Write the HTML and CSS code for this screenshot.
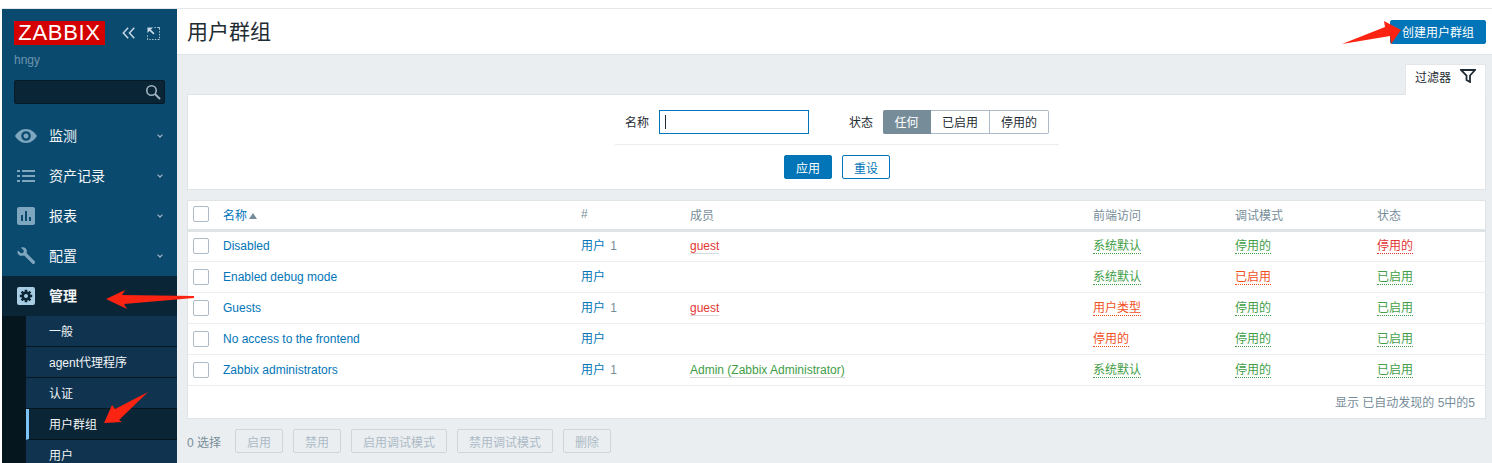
FILE: index.html
```html
<!DOCTYPE html>
<html lang="zh-CN">
<head>
    <meta charset="UTF-8">
    <title>用户群组</title>
    <link rel="stylesheet" href="styles.css">
</head>
<body>
    <div class="layout">
        <aside class="sidebar">
            <div class="brand">
                <span class="logo">ZABBIX</span>
                <svg class="tool-icon" width="14" height="12" viewBox="0 0 16 14" fill="none" stroke="#c5d8e4" stroke-width="1.7" preserveAspectRatio="none">
                    <path d="M7 1 1.500 7 7 13M14 1 8.500 7 14 13"/>
                </svg>
                <svg class="tool-icon" width="13" height="13" viewBox="0 0 14 14" fill="none" stroke="#c5d8e4">
                    <path d="M8 .5h1.500M11 .5h2.500V3M13.500 4.500V6M13.500 7.500V9M13.500 10.500V12M13.500 13.500h-2M10 13.500H8.500M7 13.500H5.500M4 13.500H2.500M1 13.500H.5V12M.5 10.500V9"/>
                    <path d="M.5.500h6l-6 6z" fill="#c5d8e4" stroke="none"/>
                    <path d="M3 3l4.500 4.500" stroke-width="1.800"/>
                </svg>
            </div>
            <div class="user-name">hngy</div>
            <div class="search-box">
                <svg width="16" height="16" viewBox="0 0 16 16" fill="none" stroke="#9fb4c2" stroke-width="1.600">
                    <circle cx="6.500" cy="6.500" r="4.700"/>
                    <path d="M10 10l5 5" stroke-width="2"/>
                </svg>
            </div>
            <nav class="menu">
                <a class="menu-item">
                    <svg class="menu-icon" width="22" height="14" viewBox="0 0 22 14"><path fill="#7ea6bf" fill-rule="evenodd" d="M11 0c5 0 9 3.500 11 7-2 3.500-6 7-11 7S2 10.500 0 7c2-3.500 6-7 11-7zm0 2.200a4.800 4.800 0 1 0 0 9.600 4.800 4.800 0 0 0 0-9.600zM11 4.500a2.500 2.500 0 1 1 0 5 2.500 2.500 0 0 1 0-5z"/></svg>
                    <span class="menu-label">监测</span><span class="chevron"></span>
                </a>
                <a class="menu-item">
                    <svg class="menu-icon" width="18" height="12" viewBox="0 0 18 12" fill="#7ea6bf"><path d="M0 0h3v2H0zM5 0h13v2H5zM0 5h3v2H0zM5 5h13v2H5zM0 10h3v2H0zM5 10h13v2H5z"/></svg>
                    <span class="menu-label">资产记录</span><span class="chevron"></span>
                </a>
                <a class="menu-item">
                    <svg class="menu-icon" width="18" height="18" viewBox="0 0 18 18"><rect width="18" height="18" rx="2" fill="#7ea6bf"/><path fill="#0b4a6f" d="M4 8h2v6H4zM8 4h2v10H8zM12 10h2v4h-2z"/></svg>
                    <span class="menu-label">报表</span><span class="chevron"></span>
                </a>
                <a class="menu-item">
                    <svg class="menu-icon" width="18" height="18" viewBox="0 0 18 18"><path fill="#7ea6bf" d="M1 3.500 4 6.300l2.300-.5.600-2.300L4 .8C6.500-.4 9.500.8 9.800 3.800c.1.900 0 1.700-.3 2.300l8 8c.7.800.6 1.700 0 2.300-.7.700-1.600.7-2.300 0l-8-7.900C4.100 9.400 1.500 8.600.6 6.300.3 5.500.5 4.300 1 3.500z"/></svg>
                    <span class="menu-label">配置</span><span class="chevron"></span>
                </a>
                <a class="menu-item menu-item-open">
                    <svg class="menu-icon" width="18" height="18" viewBox="0 0 18 18">
                        <rect width="18" height="18" rx="2" fill="#a9cde3"/>
                        <g stroke="#0a2536" stroke-width="2.600">
                            <path d="M9 2.800v12.400M2.800 9h12.400M4.600 4.600l8.800 8.800M13.400 4.600l-8.800 8.800"/>
                        </g>
                        <circle cx="9" cy="9" r="4.600" fill="#0a2536"/>
                        <circle cx="9" cy="9" r="2" fill="#a9cde3"/>
                    </svg>
                    <span class="menu-label">管理</span>
                </a>
                <div class="submenu">
                    <a class="submenu-item">一般</a>
                    <a class="submenu-item">agent代理程序</a>
                    <a class="submenu-item">认证</a>
                    <a class="submenu-item submenu-item-active">用户群组</a>
                    <a class="submenu-item">用户</a>
                </div>
            </nav>
        </aside>

        <main class="main">
            <header class="page-header">
                <h1>用户群组</h1>
                <button class="btn btn-primary">创建用户群组</button>
            </header>

            <div class="content">
                <div class="filter-tabs">
                    <div class="filter-tab">
                        过滤器
                        <svg width="16" height="14" viewBox="0 0 16 14" fill="none" stroke="#1f2c33" stroke-width="1.800"><path d="M1 1h14L10 6.500V13L6.500 11V6.500z"/></svg>
                    </div>
                </div>
                <section class="filter-panel">
                    <div class="filter-fields">
                        <label class="field-label">名称</label>
                        <div class="text-input"><span class="caret"></span></div>
                        <label class="field-label field-label-status">状态</label>
                        <div class="radio-group">
                            <span class="radio radio-on">任何</span>
                            <span class="radio">已启用</span>
                            <span class="radio">停用的</span>
                        </div>
                    </div>
                    <div class="filter-actions">
                        <button class="btn btn-primary btn-filter">应用</button>
                        <button class="btn btn-outline btn-filter">重设</button>
                    </div>
                </section>

                <section class="table-panel">
                    <table class="list-table">
                        <thead>
                            <tr>
                                <th class="col-check"><span class="checkbox"></span></th>
                                <th class="col-name"><span class="sort-link">名称</span><span class="sort-arrow"></span></th>
                                <th class="col-count">#</th>
                                <th class="col-members">成员</th>
                                <th class="col-front">前端访问</th>
                                <th class="col-debug">调试模式</th>
                                <th>状态</th>
                            </tr>
                        </thead>
                        <tbody>
                            <tr>
                                <td><span class="checkbox"></span></td>
                                <td><a class="link">Disabled</a></td>
                                <td class="cell-cjk"><a class="link">用户</a> <span class="count">1</span></td>
                                <td><a class="member red">guest</a></td>
                                <td class="cell-cjk"><span class="state green">系统默认</span></td>
                                <td class="cell-cjk"><span class="state green">停用的</span></td>
                                <td class="cell-cjk"><span class="state red">停用的</span></td>
                            </tr>
                            <tr>
                                <td><span class="checkbox"></span></td>
                                <td><a class="link">Enabled debug mode</a></td>
                                <td class="cell-cjk"><a class="link">用户</a></td>
                                <td></td>
                                <td class="cell-cjk"><span class="state green">系统默认</span></td>
                                <td class="cell-cjk"><span class="state orange">已启用</span></td>
                                <td class="cell-cjk"><span class="state green">已启用</span></td>
                            </tr>
                            <tr>
                                <td><span class="checkbox"></span></td>
                                <td><a class="link">Guests</a></td>
                                <td class="cell-cjk"><a class="link">用户</a> <span class="count">1</span></td>
                                <td><a class="member red">guest</a></td>
                                <td class="cell-cjk"><span class="state orange">用户类型</span></td>
                                <td class="cell-cjk"><span class="state green">停用的</span></td>
                                <td class="cell-cjk"><span class="state green">已启用</span></td>
                            </tr>
                            <tr>
                                <td><span class="checkbox"></span></td>
                                <td><a class="link">No access to the frontend</a></td>
                                <td class="cell-cjk"><a class="link">用户</a></td>
                                <td></td>
                                <td class="cell-cjk"><span class="state orange">停用的</span></td>
                                <td class="cell-cjk"><span class="state green">停用的</span></td>
                                <td class="cell-cjk"><span class="state green">已启用</span></td>
                            </tr>
                            <tr>
                                <td><span class="checkbox"></span></td>
                                <td><a class="link">Zabbix administrators</a></td>
                                <td class="cell-cjk"><a class="link">用户</a> <span class="count">1</span></td>
                                <td><a class="member green">Admin (Zabbix Administrator)</a></td>
                                <td class="cell-cjk"><span class="state green">系统默认</span></td>
                                <td class="cell-cjk"><span class="state green">停用的</span></td>
                                <td class="cell-cjk"><span class="state green">已启用</span></td>
                            </tr>
                        </tbody>
                    </table>
                    <div class="table-stats">显示 已自动发现的 5中的5</div>
                </section>

                <div class="action-bar">
                    <span class="selected-count">0 选择</span>
                    <button class="btn-off">启用</button>
                    <button class="btn-off">禁用</button>
                    <button class="btn-off">启用调试模式</button>
                    <button class="btn-off">禁用调试模式</button>
                    <button class="btn-off">删除</button>
                </div>
            </div>
        </main>
    </div>

    <!-- red arrows drawn over the screenshot -->
    <svg class="annotations" width="1492" height="463" viewBox="0 0 1492 463" fill="#fb2311">
        <path d="M1342 44 1385 27 1384 21 1401 30 1391 44 1390 36z"/>
        <path d="M106 299 125 290 122 295 194 296 194 298 124 304 127 309z"/>
        <path d="M104 423 112 405 115 409 148 392 119 420 122 422z"/>
    </svg>
</body>
</html>
```

FILE: styles.css
```css
* {
    box-sizing: border-box;
}

html, body {
    height: 100%;
    margin: 0;
    overflow: hidden;
}

body {
    position: relative;
    padding: 8px 0 0 2px;
    background: #fff;
    font-family: "Liberation Sans", "Noto Sans CJK SC", sans-serif;
    font-size: 12px;
    color: #1f2c33;
}

.layout {
    display: flex;
    height: 455px;
    border-top: 1px solid #e4e7e9;
}

/* sidebar */
.sidebar {
    flex: 0 0 175px;
    background: #0b4a6f;
    overflow: hidden;
}

.brand {
    display: flex;
    align-items: center;
    padding: 12px 0 0 12px;
}

.logo {
    width: 91px;
    height: 24px;
    background: #d40000;
    color: #fff;
    font-size: 22px;
    line-height: 24px;
    text-align: center;
    letter-spacing: 0.7px;
}

.tool-icon {
    margin-left: 17px;
}

.tool-icon:last-child {
    margin-left: 11px;
}

.user-name {
    padding: 8px 0 0 12px;
    height: 27px;
    color: #6d95ae;
    font-size: 12px;
}

.search-box {
    display: flex;
    align-items: center;
    justify-content: flex-end;
    width: 151px;
    height: 24px;
    margin: 8px 0 0 12px;
    padding-right: 3px;
    background: #0a2536;
    border: 1px solid #051a26;
    border-radius: 2px;
}

.menu {
    margin-top: 12px;
}

.menu-item {
    position: relative;
    display: flex;
    align-items: center;
    height: 40px;
    padding-bottom: 3px;
    color: #f2f5f7;
    font-size: 14px;
}

.menu-icon {
    position: absolute;
    left: 15px;
    top: 50%;
    transform: translateY(-50%);
}

.menu-item:first-child .menu-icon {
    left: 13px;
}

.menu-label {
    margin-left: 47px;
}

.chevron {
    position: absolute;
    right: 15px;
    top: 17px;
    width: 4px;
    height: 4px;
    border-right: 1px solid #a6c2d4;
    border-bottom: 1px solid #a6c2d4;
    transform: rotate(45deg);
}

.menu-item-open {
    background: #0a2536;
    font-weight: bold;
}

.submenu {
    padding-left: 24px;
    background: #06161f;
}

.submenu-item {
    display: flex;
    align-items: center;
    height: 31px;
    padding: 0 0 2px 23px;
    background: #10344f;
    border-bottom: 1px solid #06161f;
    color: #f2f5f7;
    font-size: 12px;
}

.submenu-item-active {
    background: #0a2536;
    padding-left: 20px;
    border-left: 3px solid #7cc4f5;
}

/* main area */
.main {
    flex: 1;
    min-width: 0;
    background: #ebeef0;
}

.page-header {
    display: flex;
    align-items: center;
    justify-content: space-between;
    height: 46px;
    padding: 0 6px 0 10px;
    background: #fff;
    border-bottom: 1px solid #dfe4e7;
}

h1 {
    margin: 0 0 3px;
    font-size: 21px;
    font-weight: normal;
}

.btn {
    height: 24px;
    padding: 0 11px;
    border: 1px solid #0275b8;
    border-radius: 2px;
    font-family: inherit;
    font-size: 12px;
}

.btn-primary {
    background: #0275b8;
    color: #fff;
}

.btn-outline {
    background: #fff;
    color: #0275b8;
}

.content {
    padding: 0 6px 0 10px;
}

.filter-tabs {
    display: flex;
    justify-content: flex-end;
    padding-top: 9px;
}

.filter-tab {
    display: flex;
    align-items: center;
    justify-content: space-between;
    width: 81px;
    height: 31px;
    margin-bottom: -1px;
    padding: 0 9px 8px 9px;
    background: #fff;
    border: 1px solid #e4e7e9;
    border-bottom: 0;
    position: relative;
    font-size: 12px;
}

.filter-panel {
    height: 96px;
    padding: 15px 0 0 1px;
    background: #fff;
    border: 1px solid #dfe4e7;
}

.filter-fields {
    display: flex;
    align-items: center;
    justify-content: center;
    box-sizing: content-box;
    width: 444px;
    height: 24px;
    margin: 0 auto;
    padding-bottom: 10px;
    border-bottom: 1px solid #ebeef0;
}

.field-label {
    margin-right: 10px;
    padding-bottom: 2px;
}

.field-label-status {
    margin-left: 40px;
}

.text-input {
    display: flex;
    align-items: center;
    width: 150px;
    height: 24px;
    padding-left: 5px;
    border: 1px solid #0275b8;
}

.caret {
    width: 1px;
    height: 14px;
    background: #1f2c33;
}

.radio-group {
    display: flex;
    height: 24px;
}

.radio {
    display: flex;
    align-items: center;
    justify-content: center;
    width: 59px;
    padding-bottom: 2px;
    border: 1px solid #acbbc7;
    border-left: 0;
}

.radio:last-child {
    border-radius: 0 2px 2px 0;
}

.radio-on {
    width: 48px;
    background: #768d99;
    border-color: #768d99;
    border-radius: 2px 0 0 2px;
    color: #fff;
}

.filter-actions {
    display: flex;
    justify-content: center;
    gap: 10px;
    margin-top: 10px;
}

.btn-filter {
    width: 48px;
    padding: 0;
}

.table-panel {
    height: 219px;
    margin-top: 10px;
    background: #fff;
    border: 1px solid #dfe4e7;
}

.list-table {
    width: 100%;
    border-collapse: collapse;
    table-layout: fixed;
}

.list-table th {
    height: 29px;
    padding: 0 0 1px 5px;
    border-bottom: 3px solid #dfe4e7;
    color: #768d99;
    font-weight: normal;
    text-align: left;
}

.list-table td {
    height: 31px;
    padding: 0 0 0 5px;
    border-bottom: 1px solid #ebeef0;
}

.list-table .cell-cjk {
    padding-bottom: 3px;
}

.col-check {
    width: 30px;
}

.col-name {
    width: 358px;
}

.col-count {
    width: 109px;
}

.col-members {
    width: 403px;
}

.col-front,
.col-debug {
    width: 142px;
}

.list-table .sort-link {
    color: #0275b8;
}

.sort-arrow {
    display: inline-block;
    margin-left: 2px;
    border: 4px solid transparent;
    border-top: 0;
    border-bottom: 6px solid #768d99;
    vertical-align: 1px;
}

.checkbox {
    display: block;
    width: 16px;
    height: 16px;
    background: #fff;
    border: 1px solid #acbbc7;
    border-radius: 2px;
}

.link {
    color: #0275b8;
}

.count {
    margin-left: 2px;
    color: #768d99;
}

.member {
    border-bottom: 1px solid #d5dadd;
}

.state {
    border-bottom: 1px dotted;
}

.green {
    color: #429e47;
}

.red {
    color: #e33734;
}

.orange {
    color: #f24f1d;
}

.table-stats {
    padding: 7px 10px 0 0;
    color: #768d99;
    text-align: right;
}

.action-bar {
    display: flex;
    align-items: center;
    gap: 10px;
    height: 24px;
    margin-top: 10px;
}

.selected-count {
    width: 38px;
    color: #768d99;
}

.btn-off {
    height: 24px;
    padding: 0 11px;
    background: #ebeef0;
    border: 1px solid #cfd6da;
    border-radius: 2px;
    color: #acbbc7;
    font-family: inherit;
    font-size: 12px;
}

.annotations {
    position: absolute;
    top: 0;
    left: 0;
    pointer-events: none;
}
```
